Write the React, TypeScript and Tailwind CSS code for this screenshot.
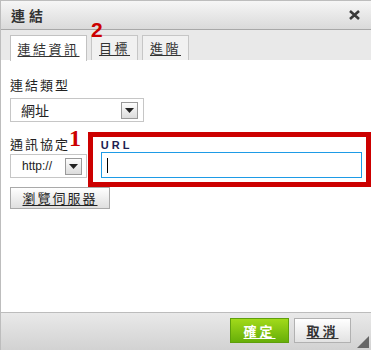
import React from 'react';

const cjk = "font-['Noto_Sans_CJK_TC','Noto_Sans',sans-serif]";

function DropArrow() {
  return (
    <span className="flex h-[17px] w-[17px] items-center justify-center border border-[#9a9a9a] bg-gradient-to-b from-[#fdfdfd] to-[#dcdcdc]">
      <svg width="9" height="5" viewBox="0 0 9 5">
        <polygon points="0,0 9,0 4.5,5" fill="#222" />
      </svg>
    </span>
  );
}

export default function App() {
  return (
    <div className={`${cjk} relative flex h-[350px] w-[371px] flex-col overflow-hidden border-l border-t border-[#bdbdbd] bg-white text-[#222]`}>
      {/* title bar */}
      <div className="flex h-[29px] shrink-0 items-center justify-between border-b border-[#a8a8a8] bg-gradient-to-b from-[#f6f6f6] to-[#dadada] pl-[10px] pr-[10px]">
        <span className="text-[14px] font-bold tracking-[4px] text-[#333]">連結</span>
        <svg width="11" height="10" viewBox="0 0 11 10" className="mr-[1px]">
          <path d="M1 1 L10 9 M10 1 L1 9" stroke="#3a3a3a" strokeWidth="2.6" />
        </svg>
      </div>

      {/* tabs */}
      <div className="relative flex h-[30px] shrink-0 items-end gap-[4px] bg-[#e9e9e9] pl-[9px]">
        <span className="absolute left-[90px] top-[-11px] font-['Liberation_Sans',sans-serif] text-[21px] font-bold leading-none text-[#cc0000]">2</span>
        <div className="-mb-px flex h-[26px] w-[77px] items-center justify-center border border-b-0 border-[#c2c2c2] bg-white">
          <span className="text-[13px] tracking-[2.5px] text-[#333] underline underline-offset-2">連結資訊</span>
        </div>
        <div className="flex h-[25px] w-[47px] items-center justify-center border border-b-0 border-[#c6c6c6] bg-[#f1f1f1]">
          <span className="text-[13px] tracking-[2.5px] text-[#333] underline underline-offset-2">目標</span>
        </div>
        <div className="flex h-[25px] w-[47px] items-center justify-center border border-b-0 border-[#c6c6c6] bg-[#f1f1f1]">
          <span className="text-[13px] tracking-[2.5px] text-[#333] underline underline-offset-2">進階</span>
        </div>
      </div>

      {/* content */}
      <div className="relative flex-1 pl-[9px] pt-[15px]">
        <div className="text-[13px] leading-[20px] tracking-[2px]">連結類型</div>
        <div className="mt-[3px] flex h-[24px] w-[134px] items-center justify-between border border-[#c6c6c6] pl-[10px] pr-[5px]">
          <span className="text-[14px]">網址</span>
          <DropArrow />
        </div>

        <div className="mt-[10px] flex">
          <div className="relative w-[78px] pt-[3px]">
            <span className="absolute left-[59px] top-[-6px] font-['Liberation_Serif',serif] text-[24px] font-bold leading-none text-[#cc0000]">1</span>
            <div className="text-[13px] leading-[18px] tracking-[2px]">通訊協定</div>
            <div className="mt-[1px] flex h-[24px] w-[77px] items-center justify-between border border-[#c6c6c6] pl-[11px] pr-[4px]">
              <span className="font-['Liberation_Sans',sans-serif] text-[12px]">http://</span>
              <DropArrow />
            </div>
          </div>
          <div className="flex h-[55px] w-[284px] flex-col border-[5px] border-[#cc0000] pl-[8px] pr-[4px] pt-[2px]">
            <span className="font-['Liberation_Sans',sans-serif] text-[11px] font-bold leading-[13px] tracking-[3px] text-[#202050]">URL</span>
            <div className="flex h-[26px] items-center border border-[#1e9be6] pl-[5px]">
              <span className="h-[15px] w-px bg-black" />
            </div>
          </div>
        </div>

        <button className="flex h-[22px] w-[100px] items-center justify-center border border-[#a9a9a9] bg-gradient-to-b from-[#ffffff] to-[#dfdfdf]">
          <span className="text-[13px] tracking-[2px] text-[#222] underline underline-offset-2">瀏覽伺服器</span>
        </button>
      </div>

      {/* footer */}
      <div className="relative flex h-[38px] shrink-0 items-start justify-end gap-[5px] border-t border-[#bcbcbc] bg-gradient-to-b from-[#e9e9e9] to-[#d2d2d2] pr-[20px] pt-[5px]">
        <button className="flex h-[25px] w-[59px] items-center justify-center border border-[#5e9f0c] bg-gradient-to-b from-[#a1da1a] to-[#67af09]">
          <span className="text-[13px] font-bold tracking-[3px] text-white underline underline-offset-2">確定</span>
        </button>
        <button className="flex h-[25px] w-[57px] items-center justify-center border border-[#b1b1b1] bg-gradient-to-b from-[#ffffff] to-[#e2e2e2]">
          <span className="text-[13px] font-bold tracking-[3px] text-[#333] underline underline-offset-2">取消</span>
        </button>
        <svg width="12" height="12" viewBox="0 0 12 12" className="absolute bottom-[2px] right-[2px]">
          <polygon points="12,0 12,12 0,12" fill="#666" />
        </svg>
      </div>
    </div>
  );
}
